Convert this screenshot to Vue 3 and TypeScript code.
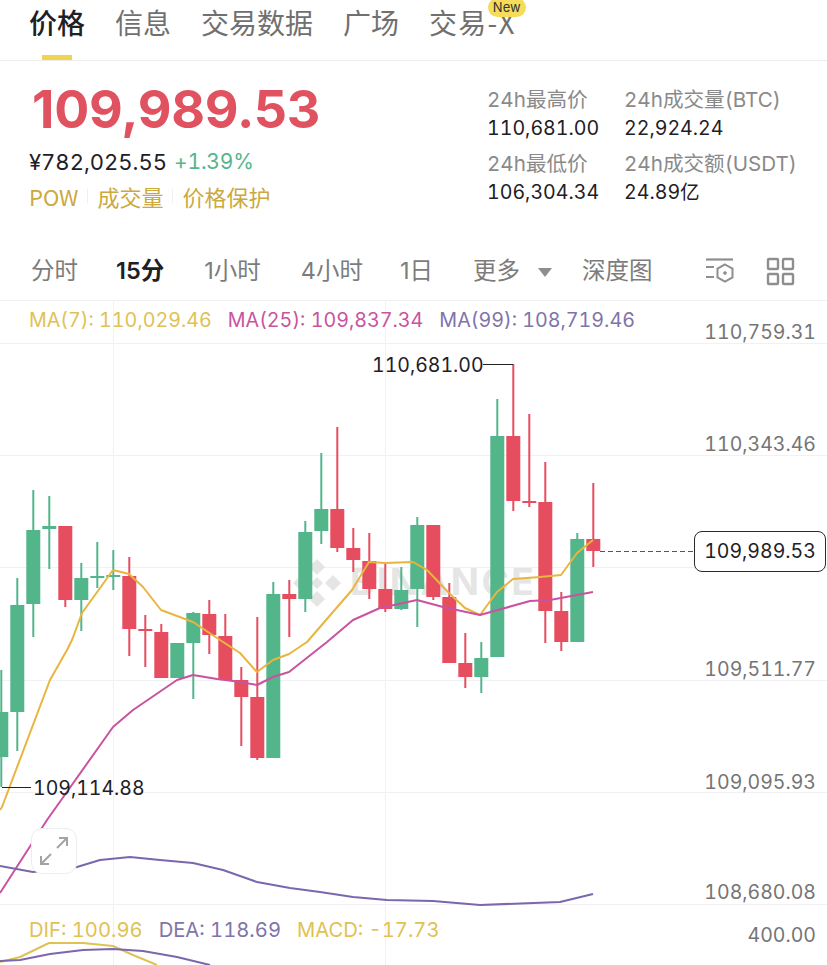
<template>
  <div class="page">
    <nav class="tabs">
      <span class="tab active">价格</span>
      <span class="tab">信息</span>
      <span class="tab">交易数据</span>
      <span class="tab">广场</span>
      <span class="tab tab-new">交易-X<em class="new-badge">New</em></span>
    </nav>

    <section class="summary">
      <div class="summary-left">
        <div class="last-price">109,989.53</div>
        <div class="sub-price">
          <span>¥782,025.55</span>
          <span class="change">+1.39%</span>
        </div>
        <div class="tags">
          <span>POW</span>
          <i></i>
          <span>成交量</span>
          <i></i>
          <span>价格保护</span>
        </div>
      </div>
      <div class="stats">
        <div v-for="stat in stats" :key="stat.label" class="stat">
          <div class="stat-label">{{ stat.label }}</div>
          <div class="stat-value">{{ stat.value }}</div>
        </div>
      </div>
    </section>

    <div class="intervals">
      <span class="iv iv-1">分时</span>
      <span class="iv iv-2 active">15分</span>
      <span class="iv iv-3">1小时</span>
      <span class="iv iv-4">4小时</span>
      <span class="iv iv-5">1日</span>
      <span class="iv iv-6">更多</span>
      <span class="caret"></span>
      <span class="iv iv-7">深度图</span>
      <svg class="tool-icon" width="30" height="30" viewBox="0 0 30 30" fill="none" stroke="#8e8e8e">
        <path d="M1 3.5H28" stroke-width="2.2" />
        <path d="M1 11H9M1 21H9" stroke-width="2.2" />
        <path d="M20 8.5L27.5 12.7V21.3L20 25.5L12.5 21.3V12.7Z" stroke-width="2" />
        <path d="M20 14.8L22.2 17L20 19.2L17.8 17Z" fill="#8e8e8e" stroke="none" />
      </svg>
      <svg class="tool-icon grid-icon" width="29" height="29" viewBox="0 0 29 29" fill="none" stroke="#8e8e8e" stroke-width="2.4">
        <rect x="2" y="2" width="10" height="10" rx="1" />
        <rect x="17" y="2" width="10" height="10" rx="1" />
        <rect x="2" y="17" width="10" height="10" rx="1" />
        <rect x="17" y="17" width="10" height="10" rx="1" />
      </svg>
    </div>

    <section class="chart">
      <svg class="plot" width="827" height="665" viewBox="0 300 827 665">
        <g stroke="#f1f1f3" stroke-width="1">
          <line v-for="y in gridY" :key="y" x1="0" x2="827" :y1="y + 0.5" :y2="y + 0.5" />
          <line x1="113.5" x2="113.5" y1="300" y2="965" />
          <line x1="385.5" x2="385.5" y1="300" y2="965" />
        </g>

        <g class="watermark" fill="#e5e5e6">
          <path d="M317 559L325 567L317 575L309 567ZM301 575L309 583L301 591L293 583ZM333 575L341 583L333 591L325 583ZM317 591L325 599L317 607L309 599ZM317 577L323 583L317 589L311 583Z" />
          <text x="350" y="595" font-size="37" font-weight="700" letter-spacing="2.5">BINANCE</text>
        </g>

        <g v-for="(c, i) in candles" :key="i" :fill="c.up ? green : red">
          <rect :x="candleX(i) - 1" :y="c.hi" width="2" :height="c.lo - c.hi" />
          <rect :x="candleX(i) - 7" :y="c.top" width="14" :height="c.bottom - c.top" />
        </g>

        <polyline class="line" stroke="#e8b53f" :points="ma7" />
        <polyline class="line" stroke="#c9539f" :points="ma25" />
        <polyline class="line" stroke="#7a67ad" :points="ma99" />
        <polyline class="line" stroke="#dfc254" :points="dif" />
        <polyline class="line" stroke="#7a67ad" :points="dea" />

        <g class="axis">
          <text v-for="a in axis" :key="a.text" x="816" :y="a.y" text-anchor="end">{{ a.text }}</text>
        </g>

        <g class="mark" stroke="#222" stroke-width="1" fill="none">
          <path d="M483 364.5H513" />
          <path d="M2 787.5H31" />
        </g>
        <text class="mark-text" x="372" y="372">110,681.00</text>
        <text class="mark-text" x="33" y="795">109,114.88</text>

        <line x1="600" x2="695" y1="551.5" y2="551.5" stroke="#555" stroke-width="1" stroke-dasharray="5 3" />
      </svg>

      <div class="legend">
        <span class="gold">MA(7): 110,029.46</span>
        <span class="pink">MA(25): 109,837.34</span>
        <span class="violet">MA(99): 108,719.46</span>
      </div>

      <div class="price-pill">109,989.53</div>

      <button class="expand" type="button" aria-label="expand">
        <svg width="32" height="32" viewBox="0 0 32 32" fill="none" stroke="#a3a3a3" stroke-width="2">
          <path d="M3 29L13 19M3 21V29H11" />
          <path d="M29 3L19 13M21 3H29V11" />
        </svg>
      </button>

      <div class="legend legend-macd">
        <span class="gold">DIF: 100.96</span>
        <span class="violet">DEA: 118.69</span>
        <span class="gold">MACD: -17.73</span>
      </div>
    </section>
  </div>
</template>

<script setup lang="ts">
interface Candle {
  up: boolean
  top: number
  bottom: number
  hi: number
  lo: number
}

const green = '#53b58a'
const red = '#e64e5f'

const stats = [
  { label: '24h最高价', value: '110,681.00' },
  { label: '24h成交量(BTC)', value: '22,924.24' },
  { label: '24h最低价', value: '106,304.34' },
  { label: '24h成交额(USDT)', value: '24.89亿' }
]

const gridY = [343, 455, 567, 680, 792, 904]

const axis = [
  { text: '110,759.31', y: 339 },
  { text: '110,343.46', y: 451 },
  { text: '109,927.62', y: 564 },
  { text: '109,511.77', y: 676 },
  { text: '109,095.93', y: 789 },
  { text: '108,680.08', y: 899 },
  { text: '400.00', y: 942 }
]

// up, body top, body bottom, wick high, wick low
const rows: [number, number, number, number, number][] = [
  [1, 712, 757, 670, 787],
  [1, 605, 712, 578, 751],
  [1, 530, 604, 490, 637],
  [1, 526, 529, 496, 569],
  [0, 526, 600, 526, 607],
  [1, 578, 600, 563, 631],
  [1, 576, 578, 542, 588],
  [1, 575, 577, 550, 590],
  [0, 576, 629, 557, 656],
  [0, 629, 631, 615, 667],
  [0, 632, 678, 624, 678],
  [1, 643, 678, 643, 678],
  [1, 613, 643, 612, 699],
  [0, 614, 635, 600, 654],
  [0, 636, 680, 614, 680],
  [0, 680, 697, 667, 746],
  [0, 697, 758, 617, 760],
  [1, 594, 758, 582, 758],
  [0, 594, 599, 580, 637],
  [1, 532, 599, 521, 612],
  [1, 509, 531, 453, 544],
  [0, 509, 548, 427, 552],
  [0, 548, 560, 528, 572],
  [0, 561, 589, 533, 599],
  [0, 589, 609, 562, 612],
  [1, 590, 609, 567, 610],
  [1, 525, 589, 517, 627],
  [0, 525, 597, 525, 600],
  [0, 597, 663, 583, 663],
  [0, 663, 677, 633, 688],
  [1, 658, 677, 642, 693],
  [1, 436, 657, 399, 657],
  [0, 436, 501, 364, 511],
  [0, 501, 503, 414, 507],
  [0, 502, 611, 462, 643],
  [0, 611, 642, 592, 651],
  [1, 539, 642, 533, 642],
  [0, 539, 551, 483, 567]
]

const candles: Candle[] = rows.map(([up, top, bottom, hi, lo]) => ({
  up: up === 1,
  top,
  bottom,
  hi,
  lo
}))

function candleX(i: number): number {
  return 1.3 + 16 * i
}

const ma7 =
  '0,810 2,807 50,680 67,650 72,640 82,613 113,570 129,574 143,587 161,610 193,622 220,640 240,653 257,672 273,660 289,654 307,642 352,590 369,562 385,563 413,562 427,570 449,593 465,608 480,615 497,592 513,579 540,577 561,575 577,553 593,540'
const ma25 =
  '0,893 47,820 113,727 133,710 177,680 193,675 217,679 233,681 257,685 273,677 289,672 327,642 353,620 380,608 417,600 443,607 480,615 530,601 550,600 593,592'
const ma99 =
  '0,866 33,872 77,867 100,860 130,857 160,860 193,863 223,870 257,882 290,888 320,892 353,897 387,900 433,901 480,905 560,902 593,894'
const dif = '0,962 20,957 49,943 83,943 113,946 133,955 157,965'
const dea = '0,961 20,960 50,954 83,950 113,949 143,951 177,957 210,965'
</script>

<style>
html,
body {
  margin: 0;
  background: #fff;
}
</style>

<style scoped>
.page {
  width: 827px;
  height: 965px;
  overflow: hidden;
  background: #fff;
  font-family: Inter, "Noto Sans CJK SC", sans-serif;
  font-variant-numeric: tabular-nums;
  color: #1e2026;
}

.tabs {
  display: flex;
  gap: 30px;
  height: 61px;
  padding-left: 29px;
  box-sizing: border-box;
  border-bottom: 1px solid #ececec;
  font-family: "Noto Sans CJK SC", sans-serif;
}

.tab {
  position: relative;
  font-size: 28px;
  line-height: 44px;
  color: #707070;
  white-space: nowrap;
}

.tab-new {
  letter-spacing: 1.2px;
}

.tab.active {
  color: #1e2026;
  font-weight: 500;
}

.tab.active::after {
  content: "";
  position: absolute;
  left: 13px;
  bottom: 0;
  width: 30px;
  height: 5px;
  background: #f0d550;
}

.new-badge {
  position: absolute;
  right: -10px;
  top: -2px;
  height: 19px;
  padding: 0 5px;
  border-radius: 10px;
  background: #f5dc5a;
  color: #333;
  letter-spacing: 0;
  font: 400 13px/18px Inter, sans-serif;
}

.summary {
  display: flex;
  height: 171px;
  box-sizing: border-box;
  padding-left: 29px;
}

.summary-left {
  width: 458px;
}

.last-price {
  margin-top: 19px;
  font-size: 52px;
  line-height: 60px;
  font-weight: 700;
  font-variant-numeric: normal;
  letter-spacing: -0.2px;
  color: #e0525f;
  padding-left: 3px;
}

.sub-price {
  display: flex;
  gap: 7px;
  margin-top: 7px;
  font-size: 22px;
  line-height: 30px;
}

.change {
  color: #56b58b;
  font-size: 21px;
  letter-spacing: -0.2px;
}

.tags {
  display: flex;
  align-items: center;
  gap: 9px;
  margin-top: 4px;
  font-size: 22px;
  line-height: 30px;
  color: #cba93f;
  font-family: "Noto Sans CJK SC", sans-serif;
}

.tags i {
  width: 1px;
  height: 14px;
  background: #efefef;
}

.stats {
  display: grid;
  grid-template-columns: 137px auto;
  grid-auto-rows: 64px;
  padding-top: 25px;
}

.stat-label {
  font-size: 20.6px;
  line-height: 28px;
  color: #8a8a8a;
  white-space: nowrap;
}

.stat-value {
  font-size: 19.6px;
  line-height: 28px;
  white-space: nowrap;
}

.intervals {
  display: flex;
  align-items: center;
  height: 68px;
  box-sizing: border-box;
  padding: 10px 0 0 31px;
  font-size: 23.5px;
  font-variant-numeric: normal;
  color: #7c7c7c;
}

.iv {
  white-space: nowrap;
  line-height: 40px;
}

.iv.active {
  color: #1e2026;
  font-weight: 600;
}

.iv-2 { margin-left: 38px; }
.iv-3 { margin-left: 40px; }
.iv-4 { margin-left: 40px; }
.iv-5 { margin-left: 37px; }
.iv-6 { margin-left: 40px; }

.caret {
  width: 0;
  height: 0;
  margin: 2px 0 0 18px;
  border-left: 7px solid transparent;
  border-right: 7px solid transparent;
  border-top: 9px solid #8e8e8e;
}

.iv-7 {
  margin-left: 30px;
}

.tool-icon {
  margin-left: 52px;
}

.grid-icon {
  margin-left: 31px;
}

.chart {
  position: relative;
  height: 665px;
  border-top: 1px solid #f0f0f0;
  box-sizing: border-box;
}

.plot {
  position: absolute;
  left: 0;
  top: -1px;
  font-family: Inter, sans-serif;
}

.line {
  fill: none;
  stroke-width: 2;
  stroke-linejoin: round;
}

.axis {
  font-size: 19.5px;
  fill: #757575;
}

.mark-text {
  font-size: 19.5px;
  fill: #1e2026;
}

.legend {
  position: relative;
  display: flex;
  gap: 16px;
  padding-left: 29px;
  font-size: 19.7px;
  line-height: 38px;
  white-space: nowrap;
}

.legend-macd {
  position: absolute;
  left: 0;
  top: 610px;
  gap: 16px;
  font-size: 20.2px;
}

.gold { color: #dfc254; }
.pink { color: #c9539f; }
.violet { color: #7f74ab; }

.price-pill {
  position: absolute;
  left: 694px;
  top: 230px;
  width: 132px;
  height: 41px;
  box-sizing: border-box;
  border: 1px solid #2a2a2a;
  border-radius: 8px;
  background: #fff;
  font-size: 19.5px;
  line-height: 39px;
  text-align: center;
}

.expand {
  position: absolute;
  left: 31px;
  top: 527px;
  width: 46px;
  height: 46px;
  padding: 0;
  display: grid;
  place-items: center;
  background: #fff;
  border: 1px solid #ededed;
  border-radius: 11px;
}
</style>
